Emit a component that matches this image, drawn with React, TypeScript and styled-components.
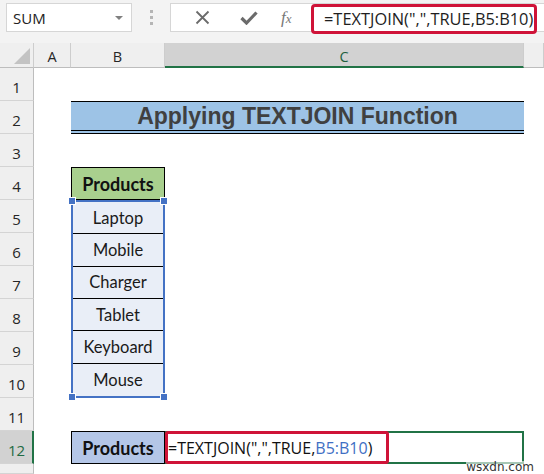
import styled, { createGlobalStyle } from 'styled-components'

const GlobalStyle = createGlobalStyle`
  html, body {
    margin: 0;
    padding: 0;
    background: #ffffff;
  }
  body {
    width: 544px;
    height: 474px;
    overflow: hidden;
    font-family: 'Lato', 'Liberation Sans', sans-serif;
  }
`

const products = ['Laptop', 'Mobile', 'Charger', 'Tablet', 'Keyboard', 'Mouse']
const rowNumbers = [1, 2, 3, 4, 5, 6, 7, 8, 9, 10, 11, 12]

export default function App() {
  return (
    <>
      <GlobalStyle />
      <Screen>
        <Toolbar>
          <NameBox>
            <span>SUM</span>
            <DropArrow />
          </NameBox>
          <Grip>
            <i />
            <i />
            <i />
          </Grip>
          <FormulaBar>
            <ToolIcon aria-label="cancel">
              <svg width="15" height="15" viewBox="0 0 15 15">
                <path d="M1.5 1.5 L13.5 13.5 M13.5 1.5 L1.5 13.5" stroke="#6b6b6b" strokeWidth="1.8" />
              </svg>
            </ToolIcon>
            <ToolIcon aria-label="enter">
              <svg width="18" height="14" viewBox="0 0 18 14">
                <path d="M1.5 7 L6.5 12 L16.5 1.5" stroke="#6b6b6b" strokeWidth="3.2" fill="none" />
              </svg>
            </ToolIcon>
            <FxLabel>
              f<sub>x</sub>
            </FxLabel>
            <FormulaInput>
              <Highlight>=TEXTJOIN(",",TRUE,B5:B10)</Highlight>
            </FormulaInput>
          </FormulaBar>
        </Toolbar>

        <Sheet>
          <Corner>
            <CornerTriangle />
          </Corner>
          <ColHeader $col={2}>A</ColHeader>
          <ColHeader $col={3}>B</ColHeader>
          <ColHeader $col={4} $active>C</ColHeader>
          <ColHeader $col={5} />

          {rowNumbers.map((n) => (
            <RowHeader key={n} $row={n + 1} $active={n === 12}>
              {n}
            </RowHeader>
          ))}
          <RowHeader $row={14} />

          <Title>Applying TEXTJOIN Function</Title>

          <HeadCell $row={5} $fill="#a9d08e">Products</HeadCell>

          <ProductList>
            {products.map((p) => (
              <ProductItem key={p}>{p}</ProductItem>
            ))}
            <Handle $top $left />
            <Handle $top />
            <Handle $left />
            <Handle />
          </ProductList>

          <HeadCell $row={13} $fill="#b4c6e7">Products</HeadCell>
          <ActiveCell>
            <CellFormula>
              =TEXTJOIN(",",TRUE,<Ref>B5:B10</Ref>)
            </CellFormula>
          </ActiveCell>
        </Sheet>

        <Watermark>wsxdn.com</Watermark>
      </Screen>
    </>
  )
}

const Screen = styled.div`
  position: relative;
  width: 544px;
  height: 474px;
  overflow: hidden;
  background: #ffffff;
`

const Toolbar = styled.div`
  height: 43px;
  background: #f3f3f3;
  display: flex;
  align-items: flex-start;
  padding-top: 3px;
  box-sizing: border-box;
`

const NameBox = styled.div`
  margin-left: 6px;
  width: 126px;
  height: 29px;
  box-sizing: border-box;
  background: #ffffff;
  border: 1px solid #d6d6d6;
  display: flex;
  align-items: center;
  justify-content: space-between;
  padding: 0 8px 0 6px;
  font-family: 'Open Sans', 'Liberation Sans', sans-serif;
  font-size: 15px;
  color: #222;
`

const DropArrow = styled.span`
  width: 0;
  height: 0;
  border-left: 4px solid transparent;
  border-right: 4px solid transparent;
  border-top: 4px solid #808080;
`

const Grip = styled.div`
  width: 38px;
  height: 29px;
  display: flex;
  flex-direction: column;
  align-items: center;
  justify-content: center;
  gap: 3px;

  > i {
    display: block;
    width: 3px;
    height: 3px;
    background: #b5b5b5;
  }
`

const FormulaBar = styled.div`
  flex: 1;
  height: 29px;
  box-sizing: border-box;
  background: #ffffff;
  border: 1px solid #d6d6d6;
  border-right: none;
  display: flex;
  align-items: center;
  padding-left: 14px;
`

const ToolIcon = styled.span`
  width: 34px;
  margin-right: 13px;
  display: flex;
  justify-content: center;
  align-items: center;
`

const FxLabel = styled.span`
  width: 30px;
  font-family: 'Liberation Serif', serif;
  font-style: italic;
  font-size: 17px;
  color: #777;
  margin-left: 2px;

  > sub {
    font-size: 13px;
    vertical-align: 0;
  }
`

const FormulaInput = styled.div`
  flex: 1;
  display: flex;
  align-items: center;
`

const Highlight = styled.span`
  width: 226px;
  height: 30px;
  margin-top: 2px;
  box-sizing: border-box;
  border: 3px solid #cf1338;
  border-radius: 4px;
  display: flex;
  align-items: center;
  padding-left: 10px;
  font-family: 'Open Sans', 'Liberation Sans', sans-serif;
  font-size: 16.4px;
  color: #1e1e1e;
  white-space: nowrap;
`

const Sheet = styled.div`
  display: grid;
  grid-template-columns: 34px 37px 94px 359px 1fr;
  grid-template-rows: 25px repeat(12, 33px) 1fr;
  height: 431px;
`

const Corner = styled.div`
  grid-column: 1;
  grid-row: 1;
  background: #efefef;
  border-right: 1px solid #cdcdcd;
  border-bottom: 1px solid #bdbdbd;
  position: relative;
`

const CornerTriangle = styled.span`
  position: absolute;
  right: 3px;
  bottom: 3px;
  width: 0;
  height: 0;
  border-left: 16px solid transparent;
  border-bottom: 16px solid #c3c3c3;
`

const ColHeader = styled.div<{ $col: number; $active?: boolean }>`
  grid-column: ${(p) => p.$col};
  grid-row: 1;
  background: ${(p) => (p.$active ? '#d2d2d2' : '#efefef')};
  border-right: 1px solid #cdcdcd;
  border-bottom: ${(p) => (p.$active ? '2px solid #217346' : '1px solid #bdbdbd')};
  display: flex;
  align-items: center;
  justify-content: center;
  padding-top: 3px;
  box-sizing: border-box;
  font-family: 'Open Sans', 'Liberation Sans', sans-serif;
  font-size: 14.5px;
  color: ${(p) => (p.$active ? '#1f5f3f' : '#262626')};
`

const RowHeader = styled.div<{ $row: number; $active?: boolean }>`
  grid-column: 1;
  grid-row: ${(p) => p.$row};
  background: ${(p) => (p.$active ? '#d2d2d2' : '#efefef')};
  border-right: ${(p) => (p.$active ? '2px solid #217346' : '1px solid #bdbdbd')};
  border-bottom: 1px solid #d4d4d4;
  box-sizing: border-box;
  display: flex;
  align-items: flex-end;
  justify-content: center;
  padding-bottom: 3px;
  padding-left: ${(p) => (p.$active ? '1px' : '0')};
  font-family: 'Open Sans', 'Liberation Sans', sans-serif;
  font-size: 15px;
  color: ${(p) => (p.$active ? '#1f6a43' : '#262626')};
`

const Title = styled.div`
  grid-column: 3 / 5;
  grid-row: 3;
  background: #9dc3e6;
  border-top: 1px solid #000;
  border-bottom: 4px double #000;
  display: flex;
  align-items: center;
  justify-content: center;
  font-family: 'Liberation Sans', Arial, sans-serif;
  font-weight: 700;
  font-size: 23px;
  color: #404040;
  box-sizing: border-box;
`

const HeadCell = styled.div<{ $row: number; $fill: string }>`
  grid-column: 3;
  grid-row: ${(p) => p.$row};
  background: ${(p) => p.$fill};
  border: 1px solid #000;
  box-sizing: border-box;
  display: flex;
  align-items: center;
  justify-content: center;
  font-weight: 700;
  font-size: 18px;
  color: #111;
`

const ProductList = styled.div`
  grid-column: 3;
  grid-row: 6 / 12;
  position: relative;
  display: grid;
  grid-template-rows: repeat(6, 1fr);
  background: #e9eef7;
  border: 2px solid #4472c4;
  box-sizing: border-box;
`

const ProductItem = styled.div`
  display: flex;
  align-items: center;
  justify-content: center;
  border-bottom: 1px solid #000;
  font-size: 16.5px;
  color: #1a1a1a;

  &:nth-child(6) {
    border-bottom: none;
  }
`

const Handle = styled.span<{ $top?: boolean; $left?: boolean }>`
  position: absolute;
  width: 6px;
  height: 6px;
  background: #4472c4;
  border: 1px solid #ffffff;
  ${(p) => (p.$top ? 'top: -5px;' : 'bottom: -5px;')}
  ${(p) => (p.$left ? 'left: -5px;' : 'right: -5px;')}
`

const ActiveCell = styled.div`
  grid-column: 4;
  grid-row: 13;
  border: 2px solid #217346;
  box-sizing: border-box;
  display: flex;
  align-items: stretch;
`

const CellFormula = styled.div`
  width: 224px;
  margin: -2px 0 -2px -2px;
  border: 3px solid #cf1338;
  border-radius: 3px;
  box-sizing: border-box;
  display: flex;
  align-items: center;
  padding-left: 0;
  font-family: 'Open Sans', 'Liberation Sans', sans-serif;
  font-size: 16px;
  color: #111;
  white-space: nowrap;
`

const Ref = styled.span`
  color: #3f6fc4;
`

const Watermark = styled.div`
  position: absolute;
  right: 10px;
  bottom: 0;
  font-family: 'DejaVu Sans', sans-serif;
  font-size: 12px;
  color: #333;
  background: rgba(255, 255, 255, 0.6);
  line-height: 13px;
`
